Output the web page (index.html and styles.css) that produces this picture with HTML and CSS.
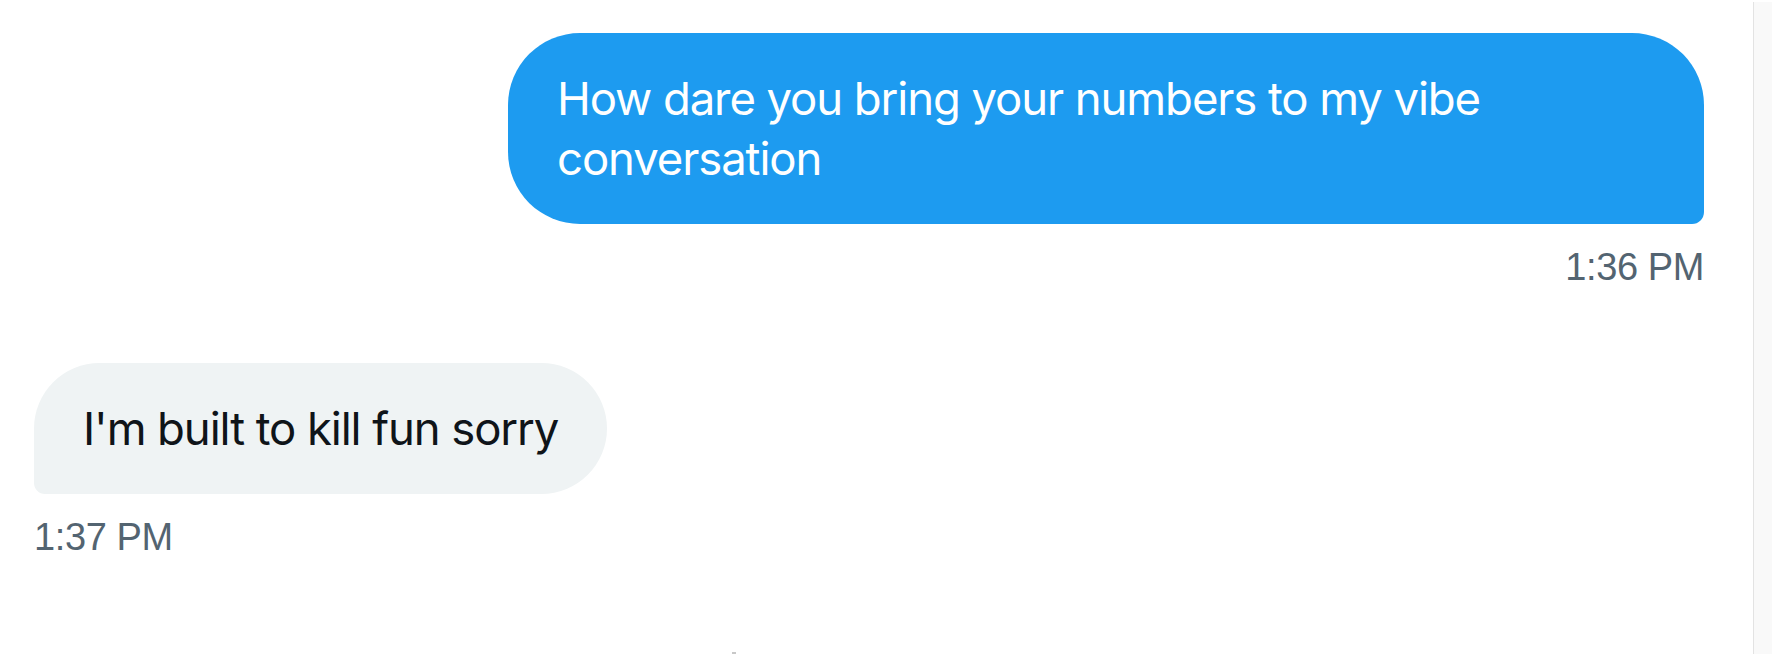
FILE: index.html
```html
<!DOCTYPE html>
<html lang="en">
<head>
<meta charset="utf-8">
<title>Conversation</title>
<link rel="stylesheet" href="styles.css">
</head>
<body>
<div class="page">
  <main class="chat">
    <div class="msg msg-out">
      <div class="bubble bubble-out">How dare you bring your numbers to my vibe conversation</div>
      <div class="time">1:36 PM</div>
    </div>
    <div class="msg msg-in">
      <div class="bubble bubble-in">I'm built to kill fun sorry</div>
      <div class="time">1:37 PM</div>
    </div>
    <div class="stub"></div>
  </main>
  <aside class="gutter"></aside>
</div>
</body>
</html>
```
FILE: styles.css
```css
html, body {
  margin: 0;
  padding: 0;
  background: #ffffff;
}
body {
  font-family: Inter, "Liberation Sans", Arial, sans-serif;
  -webkit-font-smoothing: antialiased;
}
.page {
  display: flex;
  height: 654px;
  overflow: hidden;
}
.chat {
  width: 1753px;
  flex: none;
  padding: 33px 49px 0 34px;
  box-sizing: border-box;
  display: flex;
  flex-direction: column;
  position: relative;
}
.gutter {
  flex: 1;
  margin-top: 2px;
  border-left: 1px solid #e3e3e3;
  background: #f9f9f9;
}
.msg {
  display: flex;
  flex-direction: column;
}
.msg-out {
  align-items: flex-end;
}
.msg-in {
  align-items: flex-start;
  margin-top: 70px;
}
.bubble {
  font-size: 45.5px;
  letter-spacing: -1.1px;
  line-height: 60px;
  padding: 36px 49px 35px;
  box-sizing: border-box;
}
.bubble-out {
  max-width: 1196px;
  background: #1d9bf0;
  color: #ffffff;
  border-radius: 72px 72px 12px 72px;
}
.bubble-in {
  background: #eff3f4;
  color: #0f1419;
  border-radius: 72px 72px 72px 12px;
}
.time {
  font-family: "Liberation Sans", Arial, sans-serif;
  font-size: 38px;
  letter-spacing: -0.4px;
  line-height: 52px;
  color: #536471;
  margin-top: 17px;
}
.stub {
  position: absolute;
  left: 732px;
  bottom: 0;
  width: 4px;
  height: 2px;
  background: #c8c8c8;
}
```
